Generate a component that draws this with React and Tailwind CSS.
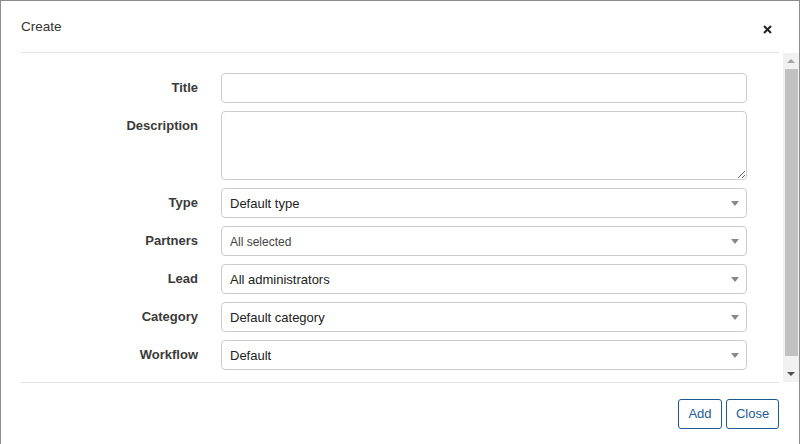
import React from 'react';

const font = { fontFamily: '"Liberation Sans", Arial, sans-serif' };

const Arrow = () => (
  <svg width="8" height="5" viewBox="0 0 8 5" className="shrink-0">
    <path d="M0 0 L8 0 L4 5 Z" fill="#888888" />
  </svg>
);

const Select = ({ value, small }) => (
  <div className="w-[526px] h-[30px] border border-[#cccccc] rounded-[4px] bg-white flex items-center justify-between pl-[8px] pr-[7px]">
    <span className={small ? 'text-[12px] text-[#444] pt-[1px]' : 'text-[13px] text-[#222] pt-[1px]'}>{value}</span>
    <Arrow />
  </div>
);

const Row = ({ label, children }) => (
  <div className="flex mb-[8px]">
    <div className="w-[220px] pr-[23px] pt-[7px] text-right text-[13px] leading-[16px] font-bold text-[#3a3a3a]">
      {label}
    </div>
    {children}
  </div>
);

export default function App() {
  return (
    <div style={font} className="w-[800px] h-[444px] bg-white border-l border-r border-t border-[#8c8c8c] flex flex-col overflow-hidden">
      {/* Header */}
      <div className="h-[52px] mx-[20px] border-b border-[#e5e5e5] flex items-center justify-between pr-[7px] shrink-0">
        <span className="text-[13.5px] text-[#333] pt-[1px]">Create</span>
        <svg width="9" height="9" viewBox="0 0 9 9" className="mt-[5px]">
          <path d="M1 1 L8 8 M8 1 L1 8" stroke="#222" strokeWidth="2" />
        </svg>
      </div>

      {/* Body */}
      <div className="flex h-[329px] shrink-0">
        <div className="flex-1 pt-[20px]">
          <Row label="Title">
            <input className="w-[526px] h-[30px] border border-[#cccccc] rounded-[4px] outline-none" />
          </Row>
          <Row label="Description">
            <textarea className="w-[526px] h-[69px] border border-[#cccccc] rounded-[4px] outline-none block" />
          </Row>
          <Row label="Type">
            <Select value="Default type" />
          </Row>
          <Row label="Partners">
            <Select value="All selected" small />
          </Row>
          <Row label="Lead">
            <Select value="All administrators" />
          </Row>
          <Row label="Category">
            <Select value="Default category" />
          </Row>
          <Row label="Workflow">
            <Select value="Default" />
          </Row>
        </div>

        {/* Scrollbar */}
        <div className="w-[16px] bg-[#f1f1f1] flex flex-col items-center">
          <div className="h-[16px] w-full flex items-center justify-center">
            <svg width="8" height="4" viewBox="0 0 8 4">
              <path d="M0 4 L8 4 L4 0 Z" fill="#a3a3a3" />
            </svg>
          </div>
          <div className="w-[13px] h-[287px] bg-[#c1c1c1]" />
          <div className="flex-1" />
          <div className="h-[17px] w-full flex items-center justify-center">
            <svg width="8" height="4" viewBox="0 0 8 4">
              <path d="M0 0 L8 0 L4 4 Z" fill="#505050" />
            </svg>
          </div>
        </div>
      </div>

      {/* Footer */}
      <div className="mx-[20px] border-t border-[#e5e5e5] pt-[16px] flex justify-end gap-[4px]">
        <button className="w-[44px] h-[30px] border border-[#1c5a96] rounded-[3px] text-[13px] text-[#1c5a96] bg-white">
          Add
        </button>
        <button className="w-[53px] h-[30px] border border-[#1c5a96] rounded-[3px] text-[13px] text-[#1c5a96] bg-white">
          Close
        </button>
      </div>
    </div>
  );
}
